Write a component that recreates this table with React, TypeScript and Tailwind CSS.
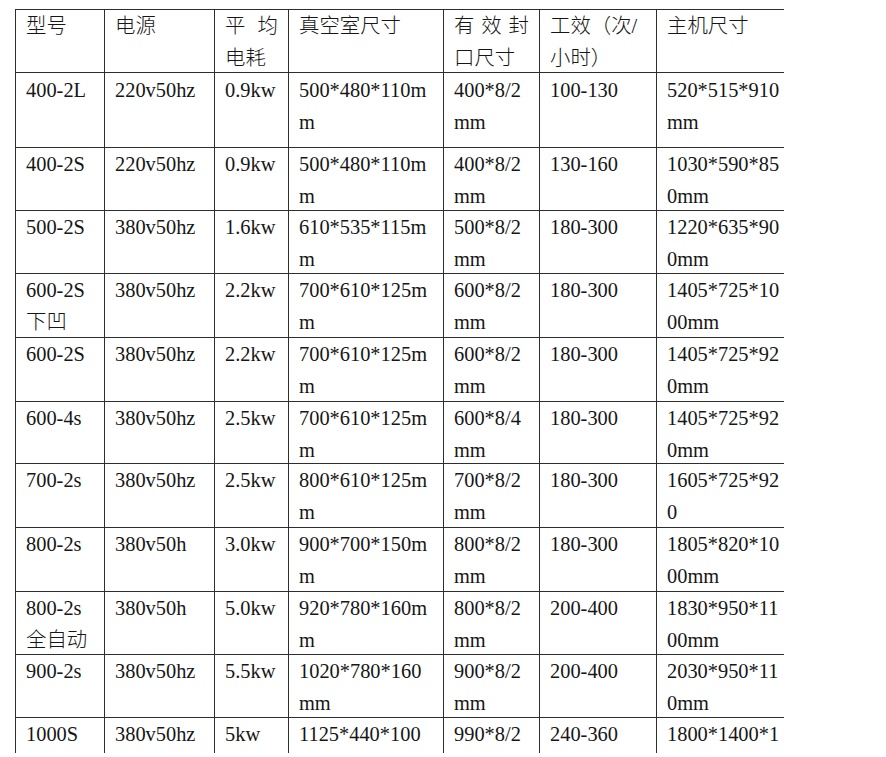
import React from 'react';

const cols = ['w-[89px]', 'w-[110px]', 'w-[74px]', 'w-[155px]', 'w-[96px]', 'w-[117px]', 'w-[170px]'];

type Row = { h: string; pt?: string; cells: string[][] };

const rows: Row[] = [
  { h: 'h-[75px]', pt: 'pt-[1px]', cells: [['400-2L'], ['220v50hz'], ['0.9kw'], ['500*480*110m', 'm'], ['400*8/2', 'mm'], ['100-130'], ['520*515*910', 'mm']] },
  { h: 'h-[63px]', cells: [['400-2S'], ['220v50hz'], ['0.9kw'], ['500*480*110m', 'm'], ['400*8/2', 'mm'], ['130-160'], ['1030*590*85', '0mm']] },
  { h: 'h-[63px]', cells: [['500-2S'], ['380v50hz'], ['1.6kw'], ['610*535*115m', 'm'], ['500*8/2', 'mm'], ['180-300'], ['1220*635*90', '0mm']] },
  { h: 'h-[64px]', cells: [['600-2S', '下凹'], ['380v50hz'], ['2.2kw'], ['700*610*125m', 'm'], ['600*8/2', 'mm'], ['180-300'], ['1405*725*10', '00mm']] },
  { h: 'h-[64px]', cells: [['600-2S'], ['380v50hz'], ['2.2kw'], ['700*610*125m', 'm'], ['600*8/2', 'mm'], ['180-300'], ['1405*725*92', '0mm']] },
  { h: 'h-[62px]', cells: [['600-4s'], ['380v50hz'], ['2.5kw'], ['700*610*125m', 'm'], ['600*8/4', 'mm'], ['180-300'], ['1405*725*92', '0mm']] },
  { h: 'h-[64px]', cells: [['700-2s'], ['380v50hz'], ['2.5kw'], ['800*610*125m', 'm'], ['700*8/2', 'mm'], ['180-300'], ['1605*725*92', '0']] },
  { h: 'h-[64px]', cells: [['800-2s'], ['380v50h'], ['3.0kw'], ['900*700*150m', 'm'], ['800*8/2', 'mm'], ['180-300'], ['1805*820*10', '00mm']] },
  { h: 'h-[63px]', cells: [['800-2s', '全自动'], ['380v50h'], ['5.0kw'], ['920*780*160m', 'm'], ['800*8/2', 'mm'], ['200-400'], ['1830*950*11', '00mm']] },
  { h: 'h-[63px]', cells: [['900-2s'], ['380v50hz'], ['5.5kw'], ['1020*780*160', 'mm'], ['900*8/2', 'mm'], ['200-400'], ['2030*950*11', '0mm']] },
  { h: 'h-[40px]', cells: [['1000S'], ['380v50hz'], ['5kw'], ['1125*440*100'], ['990*8/2'], ['240-360'], ['1800*1400*1']] },
];

const Spread = ({ chars }: { chars: string[] }) => (
  <div className="flex justify-between pr-[10px]">
    {chars.map((c, i) => (
      <span key={i}>{c}</span>
    ))}
  </div>
);

export default function App() {
  const header: React.ReactNode[] = [
    <div>型号</div>,
    <div>电源</div>,
    <>
      <Spread chars={['平', '均']} />
      <div>电耗</div>
    </>,
    <div>真空室尺寸</div>,
    <>
      <Spread chars={['有', '效', '封']} />
      <div>口尺寸</div>
    </>,
    <>
      <div>工效（次/</div>
      <div>小时）</div>
    </>,
    <div>主机尺寸</div>,
  ];

  return (
    <div
      className="w-[886px] h-[757px] bg-white overflow-hidden pt-[9px] pl-[15px] text-[20.4px] leading-[32px] text-[#161616] font-light"
      style={{ fontFamily: '"Liberation Serif", "Noto Sans CJK SC", serif' }}
    >
      <div className="w-[769px] h-[744px] overflow-hidden">
        {/* header */}
        <div className="flex h-[63px] border-t border-[#2e2e2e]">
          {header.map((node, i) => (
            <div key={i} className={`${cols[i]} shrink-0 border-l border-[#2e2e2e] pl-[10px]`}>
              {node}
            </div>
          ))}
        </div>
        {rows.map((r, ri) => (
          <div key={ri} className={`flex ${r.h} border-t border-[#2e2e2e]`}>
            {r.cells.map((lines, ci) => (
              <div key={ci} className={`${cols[ci]} shrink-0 border-l border-[#2e2e2e] pl-[10px] ${r.pt ?? ''} whitespace-nowrap`}>
                {lines.map((l, li) => (
                  <div key={li}>{l}</div>
                ))}
              </div>
            ))}
          </div>
        ))}
      </div>
    </div>
  );
}
